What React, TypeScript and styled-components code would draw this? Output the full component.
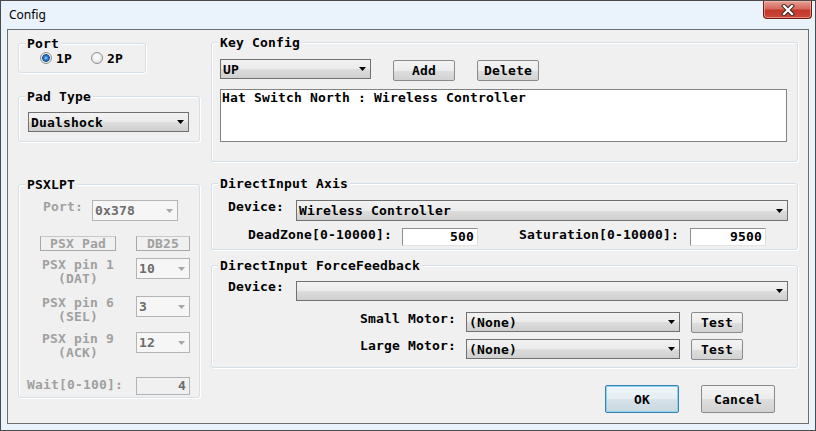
import React from 'react';
import styled, { createGlobalStyle, css } from 'styled-components';

const FONT = `"DejaVu Sans Mono", "Liberation Mono", monospace`;

const GlobalStyle = createGlobalStyle`
  html, body { margin: 0; padding: 0; background: #ffffff; }
  body { font-family: ${FONT}; }
  * { box-sizing: border-box; }
`;

const Window = styled.div`
  width: 816px;
  height: 431px;
  border: 1px solid #4a4a4a;
  background: #eaf2fb;
  display: flex;
  flex-direction: column;
`;

const TitleBar = styled.div`
  height: 28px;
  flex: 0 0 28px;
  display: flex;
  align-items: flex-start;
  padding-left: 8px;
`;

const Title = styled.span`
  font-family: "Noto Sans", "Open Sans", sans-serif;
  font-size: 12px;
  line-height: 16px;
  margin-top: 6px;
  color: #000;
`;

const CloseButton = styled.div`
  margin-left: auto;
  margin-right: 3px;
  width: 49px;
  height: 18px;
  border: 1px solid #6f1d16;
  border-top: none;
  border-radius: 0 0 4px 4px;
  background: linear-gradient(#e8a196 0%, #d5695d 45%, #c4372b 55%, #c9493b 100%);
  box-shadow: inset 0 0 0 1px rgba(255, 200, 190, 0.5);
  display: flex;
  align-items: center;
  justify-content: center;
`;

const Client = styled.div`
  flex: 1;
  margin: 0 6px 6px 6px;
  border: 1px solid #6e6e6e;
  background: #f0f0f0;
  display: grid;
  grid-template-columns: 182px 587px;
  column-gap: 11px;
  padding: 0 10px;
  font-family: ${FONT};
  font-weight: bold;
  font-size: 13px;
  line-height: 15px;
  letter-spacing: 0.17px;
  color: #000;
`;

const Column = styled.div`
  display: flex;
  flex-direction: column;
  align-items: flex-start;
`;

const Group = styled.div<{ $w: number; $h: number; $mt: number; $pt?: number; $pl?: number }>`
  position: relative;
  flex-shrink: 0;
  width: ${(p) => p.$w}px;
  height: ${(p) => p.$h}px;
  margin-top: ${(p) => p.$mt}px;
  padding-top: ${(p) => p.$pt ?? 0}px;
  padding-left: ${(p) => p.$pl ?? 0}px;
  border: 1px solid #d5dfe5;
  border-radius: 3px;
  box-shadow: inset 1px 1px 0 #ffffff, 1px 1px 0 #ffffff;
  display: flex;
  flex-direction: column;
  align-items: flex-start;
`;

const Legend = styled.span`
  position: absolute;
  top: -8px;
  left: 6px;
  padding: 0 2px;
  background: #f0f0f0;
  white-space: pre;
`;

const Row = styled.div<{ $mt?: number; $ml?: number }>`
  display: flex;
  align-items: flex-start;
  flex-shrink: 0;
  margin-top: ${(p) => p.$mt ?? 0}px;
  margin-left: ${(p) => p.$ml ?? 0}px;
`;

const Label = styled.span<{ $w?: number; $mt?: number; $disabled?: boolean; $ml?: number }>`
  ${(p) => (p.$w ? `width: ${p.$w}px;` : '')}
  flex-shrink: 0;
  margin-top: ${(p) => p.$mt ?? 0}px;
  margin-left: ${(p) => p.$ml ?? 0}px;
  white-space: pre;
  color: ${(p) => (p.$disabled ? '#a0a0a0' : '#000')};
`;

const PinLabel = styled.span`
  width: 76px;
  flex-shrink: 0;
  text-align: center;
  line-height: 14px;
  color: #a0a0a0;
  white-space: pre;
`;

const ComboBox = styled.div<{ $w: number; $h?: number; $disabled?: boolean; $ml?: number }>`
  width: ${(p) => p.$w}px;
  height: ${(p) => p.$h ?? 20}px;
  flex-shrink: 0;
  margin-left: ${(p) => p.$ml ?? 0}px;
  display: flex;
  align-items: center;
  padding-left: 2px;
  padding-right: 4px;
  white-space: pre;
  ${(p) =>
    p.$disabled
      ? css`
          border: 1px solid #b4b4b4;
          background: #f6f6f6;
          color: #6d6d6d;
        `
      : css`
          border: 1px solid #707070;
          background: linear-gradient(#f2f2f2 0%, #ebebeb 50%, #dddddd 51%, #cfcfcf 100%);
          color: #000;
        `}
`;

const ArrowSvg = styled.svg`
  margin-left: auto;
  flex-shrink: 0;
`;

const Arrow = ({ disabled }: { disabled?: boolean }) => (
  <ArrowSvg width="7" height="4" viewBox="0 0 7 4">
    <polygon points="0,0 7,0 3.5,4" fill={disabled ? '#a7a7a7' : '#000'} />
  </ArrowSvg>
);

const Combo = ({
  w,
  h,
  value,
  disabled,
  ml,
}: {
  w: number;
  h?: number;
  value: string;
  disabled?: boolean;
  ml?: number;
}) => (
  <ComboBox $w={w} $h={h} $disabled={disabled} $ml={ml}>
    <span>{value}</span>
    <Arrow disabled={disabled} />
  </ComboBox>
);

const Button = styled.button<{ $w: number; $h: number; $ml?: number; $mt?: number; $focused?: boolean }>`
  width: ${(p) => p.$w}px;
  height: ${(p) => p.$h}px;
  flex-shrink: 0;
  margin-left: ${(p) => p.$ml ?? 0}px;
  margin-top: ${(p) => p.$mt ?? 0}px;
  padding: 0;
  font: inherit;
  letter-spacing: inherit;
  color: #000;
  border: 1px solid #8a8a8a;
  border-radius: 2px;
  background: linear-gradient(#f4f4f4 0%, #ececec 50%, #dedede 51%, #d2d2d2 100%);
  ${(p) =>
    p.$focused &&
    css`
      border-color: #3c7fb1;
      box-shadow: inset 0 0 0 1px #8fd3f2;
      background: linear-gradient(#f0f6fa 0%, #e6eef3 50%, #d7e2ea 51%, #cad7e0 100%);
    `}
`;

const EditBox = styled.div<{ $w: number; $h: number; $ml?: number; $disabled?: boolean }>`
  width: ${(p) => p.$w}px;
  height: ${(p) => p.$h}px;
  flex-shrink: 0;
  margin-left: ${(p) => p.$ml ?? 0}px;
  text-align: right;
  padding-right: 3px;
  line-height: ${(p) => p.$h - 2}px;
  ${(p) =>
    p.$disabled
      ? css`
          border: 1px solid #b4b4b4;
          background: #f0f0f0;
          color: #6d6d6d;
        `
      : css`
          border-style: solid;
          border-width: 1px;
          border-color: #8e8f8f #dcdcdc #e3e3e3 #8e8f8f;
          background: #ffffff;
        `}
`;

const ListBox = styled.div`
  width: 567px;
  height: 53px;
  flex-shrink: 0;
  margin-top: 8px;
  border: 1px solid #828282;
  background: #ffffff;
  padding: 0 0 0 1px;
  white-space: pre;
`;

const StaticBox = styled.div<{ $w: number; $ml?: number }>`
  width: ${(p) => p.$w}px;
  flex-shrink: 0;
  height: 15px;
  margin-left: ${(p) => p.$ml ?? 0}px;
  border: 1px solid #a8a8a8;
  border-top-color: #c8c8c8;
  text-align: center;
  line-height: 13px;
  color: #a0a0a0;
  white-space: pre;
`;

const RadioItem = styled.label`
  display: flex;
  align-items: center;
  gap: 4px;
`;

const RadioCircle = styled.span<{ $checked?: boolean }>`
  width: 12px;
  height: 12px;
  border-radius: 50%;
  border: 1px solid #8e8f8f;
  background: radial-gradient(circle at 45% 40%, #ffffff 0%, #f0f0f0 45%, #d4d4d4 100%);
  ${(p) =>
    p.$checked &&
    css`
      background: radial-gradient(
        circle at 50% 50%,
        #8fd0f8 0px,
        #2a7fd0 2px,
        #1a4f8c 3.5px,
        #e8e8e8 4.2px,
        #f6f6f6 100%
      );
    `}
`;

const RadioRow = styled.div`
  display: flex;
  align-items: center;
  gap: 19px;
  height: 100%;
  padding-left: 21px;
`;

const ButtonsRow = styled.div`
  display: flex;
  align-self: stretch;
  justify-content: flex-end;
  gap: 22px;
  margin-top: 17px;
  padding-right: 23px;
`;

const CloseIcon = () => (
  <svg width="14" height="12" viewBox="0 0 14 12">
    <path d="M3 2 L11 10 M11 2 L3 10" stroke="#3a2a28" strokeWidth="4.2" strokeLinecap="square" />
    <path d="M3 2 L11 10 M11 2 L3 10" stroke="#ffffff" strokeWidth="2.2" strokeLinecap="square" />
  </svg>
);

export default function App() {
  return (
    <>
      <GlobalStyle />
      <Window>
        <TitleBar>
          <Title>Config</Title>
          <CloseButton>
            <CloseIcon />
          </CloseButton>
        </TitleBar>
        <Client>
          <Column>
            <Group $w={128} $h={30} $mt={13}>
              <Legend>Port</Legend>
              <RadioRow>
                <RadioItem>
                  <RadioCircle $checked />
                  <span>1P</span>
                </RadioItem>
                <RadioItem>
                  <RadioCircle />
                  <span>2P</span>
                </RadioItem>
              </RadioRow>
            </Group>

            <Group $w={182} $h={46} $mt={23} $pt={15} $pl={9}>
              <Legend>Pad Type</Legend>
              <Combo w={161} value="Dualshock" />
            </Group>

            <Group $w={182} $h={214} $mt={42} $pt={15}>
              <Legend>PSXLPT</Legend>
              <Row $ml={24}>
                <Label $w={49} $mt={-1} $disabled>
                  Port:
                </Label>
                <Combo w={86} h={21} value="0x378" disabled />
              </Row>
              <Row $mt={15} $ml={21}>
                <StaticBox $w={76}>PSX Pad</StaticBox>
                <StaticBox $w={54} $ml={20}>
                  DB25
                </StaticBox>
              </Row>
              <Row $mt={7} $ml={21}>
                <PinLabel>{'PSX pin 1\n(DAT)'}</PinLabel>
                <Combo w={54} h={21} ml={20} value="10" disabled />
              </Row>
              <Row $mt={10} $ml={21}>
                <PinLabel>{'PSX pin 6\n(SEL)'}</PinLabel>
                <Combo w={54} h={21} ml={20} value="3" disabled />
              </Row>
              <Row $mt={8} $ml={21}>
                <PinLabel>{'PSX pin 9\n(ACK)'}</PinLabel>
                <Combo w={54} h={21} ml={20} value="12" disabled />
              </Row>
              <Row $mt={17} $ml={8}>
                <Label $w={109} $disabled>
                  Wait[0-100]:
                </Label>
                <EditBox $w={54} $h={18} $disabled>
                  4
                </EditBox>
              </Row>
            </Group>
          </Column>

          <Column>
            <Group $w={587} $h={120} $mt={12} $pt={16} $pl={8}>
              <Legend>Key Config</Legend>
              <Row>
                <Combo w={151} value="UP" />
                <Button $w={62} $h={21} $ml={22} $mt={1}>
                  Add
                </Button>
                <Button $w={62} $h={21} $ml={22} $mt={1}>
                  Delete
                </Button>
              </Row>
              <ListBox>Hat Switch North : Wireless Controller</ListBox>
            </Group>

            <Group $w={587} $h={67} $mt={21} $pt={16} $pl={16}>
              <Legend>DirectInput Axis</Legend>
              <Row>
                <Label $w={68} $mt={-1}>
                  Device:
                </Label>
                <Combo w={492} h={21} value="Wireless Controller" />
              </Row>
              <Row $mt={7} $ml={20}>
                <Label $w={154} $mt={-1}>
                  DeadZone[0-10000]:
                </Label>
                <EditBox $w={76} $h={18}>
                  500
                </EditBox>
                <Label $w={171} $mt={-1} $ml={41}>
                  Saturation[0-10000]:
                </Label>
                <EditBox $w={76} $h={18}>
                  9500
                </EditBox>
              </Row>
            </Group>

            <Group $w={587} $h={103} $mt={15} $pt={15} $pl={16}>
              <Legend>DirectInput ForceFeedback</Legend>
              <Row>
                <Label $w={68} $mt={-2}>
                  Device:
                </Label>
                <Combo w={492} value="" />
              </Row>
              <Row $mt={11} $ml={132}>
                <Label $w={106} $mt={-1}>
                  Small Motor:
                </Label>
                <Combo w={214} value="(None)" />
                <Button $w={52} $h={21} $ml={11}>
                  Test
                </Button>
              </Row>
              <Row $mt={6} $ml={132}>
                <Label $w={106} $mt={-1}>
                  Large Motor:
                </Label>
                <Combo w={214} value="(None)" />
                <Button $w={52} $h={21} $ml={11}>
                  Test
                </Button>
              </Row>
            </Group>

            <ButtonsRow>
              <Button $w={74} $h={28} $focused>
                OK
              </Button>
              <Button $w={74} $h={28}>
                Cancel
              </Button>
            </ButtonsRow>
          </Column>
        </Client>
      </Window>
    </>
  );
}
